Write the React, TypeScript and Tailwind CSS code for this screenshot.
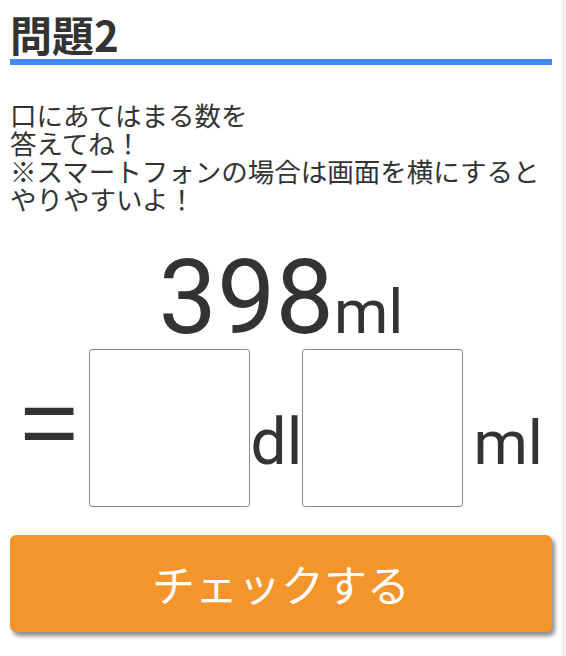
import React from "react";

const jp = { fontFamily: '"Noto Sans CJK JP", "Noto Sans", sans-serif' };
const num = { fontFamily: 'Roboto, "Liberation Sans", sans-serif' };

function AnswerBox() {
  return (
    <input
      type="text"
      aria-label="answer"
      className="h-[158px] w-[161px] shrink-0 rounded-[3px] border border-[#8a8a8a] bg-white outline-none"
    />
  );
}

export default function App() {
  return (
    <div className="flex min-h-[656px] w-full bg-white text-[#333]">
      <main className="w-[562px] shrink-0 px-[10px]">
        <h2
          style={jp}
          className="border-b-[6px] border-[#3e8cf4] pt-[13px] pb-[4px] text-[42px] font-bold leading-none"
        >
          問題2
        </h2>

        <p style={jp} className="mt-[36px] text-[26.5px] leading-[28px]">
          口にあてはまる数を
          <br />
          答えてね！
          <br />
          ※スマートフォンの場合は画面を横にすると
          <br />
          やりやすいよ！
        </p>

        <div style={num} className="mt-[33px] flex items-baseline justify-center leading-none">
          <span className="text-[104px]">398</span>
          <span className="text-[62px]">ml</span>
        </div>

        <div style={num} className="-mt-px flex items-end pl-[10px] leading-none">
          <span
            style={{ fontFamily: '"Liberation Sans", Arial, sans-serif' }}
            className="mb-[35px] text-[100px]"
          >
            =
          </span>
          <div className="ml-[11px]">
            <AnswerBox />
          </div>
          <span className="mb-[32px] w-[52px] text-center text-[64px]">dl</span>
          <AnswerBox />
          <span className="mb-[33px] pl-[10px] text-[62px]">ml</span>
        </div>

        <button
          type="button"
          style={jp}
          className="mt-[28px] flex h-[97px] w-full items-center justify-center rounded-[6px] bg-[#f4952b] text-[43px] leading-none text-white shadow-[3px_4px_4px_rgba(0,0,0,0.45)]"
        >
          チェックする
        </button>
      </main>
      <div className="w-[4px] shrink-0 bg-[#f1f1f1]" />
    </div>
  );
}
